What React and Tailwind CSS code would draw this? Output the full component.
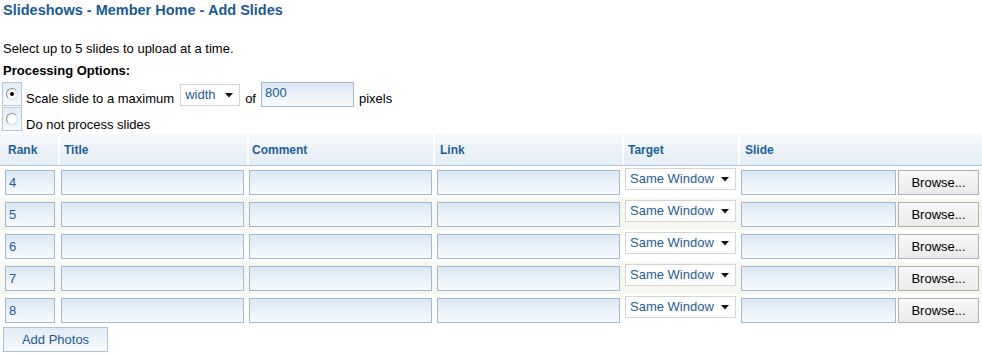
import React from 'react';

const ranks = [4, 5, 6, 7, 8];

const inputCls =
  'h-[25px] border border-[#9dbbd2] bg-linear-to-b from-[#dbe7f3] to-[#f8fbfd] px-[3px] text-[13px] text-[#1f5c99] outline-none';

const Radio = ({ checked }) => (
  <div className="ml-[2px] h-[24px] w-[20px] border border-[#b2c9db] bg-linear-to-b from-[#e3ecf5] to-[#f6f9fc] pl-[3px] pt-[5px]">
    <div className="flex h-[12px] w-[12px] items-center justify-center rounded-full border border-t-[#8a8a8a] border-l-[#8a8a8a] border-r-[#d8d8d8] border-b-[#d8d8d8] bg-white">
      {checked && <div className="h-[4px] w-[4px] rounded-full bg-black" />}
    </div>
  </div>
);

const Arrow = () => (
  <svg width="8" height="5" viewBox="0 0 8 5" className="shrink-0">
    <path d="M0 0h8L4 4.5z" fill="#111" />
  </svg>
);

const FakeSelect = ({ value, width, className = '' }) => (
  <div
    className={`flex h-[22px] items-center justify-between border border-[#d4d4d4] bg-white pl-[4px] pr-[6px] text-[13px] text-[#1f5c99] ${width} ${className}`}
  >
    <span>{value}</span>
    <Arrow />
  </div>
);

const cols = 'grid grid-cols-[58px_189px_186px_189px_116px_244px]';

export default function App() {
  return (
    <div className="h-[356px] w-[982px] overflow-hidden bg-white font-['Liberation_Sans',Arial,sans-serif] text-[13px] text-black">
      {/* header title */}
      <h1 className="h-[20px] pl-[3px] text-[14.5px] font-bold leading-[20px] text-[#1b5a96]">
        Slideshows - Member Home - Add Slides
      </h1>

      <p className="mt-[18px] pl-[3px] leading-[22px]">Select up to 5 slides to upload at a time.</p>
      <p className="pl-[3px] font-bold leading-[22px]">Processing Options:</p>

      {/* processing options */}
      <div className="flex h-[25px] items-start">
        <Radio checked />
        <span className="ml-[4px] mt-[9px] leading-[15px]">Scale slide to a maximum</span>
        <FakeSelect value="width" width="w-[60px]" className="ml-[6px] mt-[2px]" />
        <span className="ml-[5px] mt-[9px] leading-[15px]">of</span>
        <input
          readOnly
          value="800"
          className="ml-[5px] h-[25px] w-[93px] border border-[#9dbbd2] bg-linear-to-b from-[#dbe7f3] to-[#f8fbfd] px-[3px] pb-[4px] text-[13px] text-[#1f5c99] outline-none"
        />
        <span className="ml-[5px] mt-[9px] leading-[15px]">pixels</span>
      </div>
      <div className="flex h-[25px] items-start">
        <Radio />
        <span className="ml-[4px] mt-[10px] leading-[15px]">Do not process slides</span>
      </div>

      {/* slides table */}
      <div className="mt-[2px]">
        <div
          className={`${cols} h-[32px] border-b border-[#a8c6de] bg-linear-to-b from-[#f5f8fc] to-[#e4edf6] text-[12px] font-bold text-[#1e5f9c]`}
        >
          <div className="flex items-center pl-[8px]">Rank</div>
          <div className="flex items-center border-l-2 border-white pl-[4px]">Title</div>
          <div className="flex items-center border-l-2 border-white pl-[3px]">Comment</div>
          <div className="flex items-center border-l-2 border-white pl-[5px]">Link</div>
          <div className="flex items-center border-l-2 border-white pl-[4px]">Target</div>
          <div className="flex items-center border-l-2 border-white pl-[5px]">Slide</div>
        </div>

        {ranks.map((r, i) => (
          <div
            key={r}
            className={`${cols} h-[32px] pt-[4px] ${i % 2 === 1 ? 'bg-[#f7f6f0]' : 'bg-white'}`}
          >
            <div className="pl-[5px]">
              <input readOnly value={r} className={`${inputCls} w-[50px]`} />
            </div>
            <div className="pl-[3px]">
              <input readOnly className={`${inputCls} w-[183px]`} />
            </div>
            <div className="pl-[2px]">
              <input readOnly className={`${inputCls} w-[183px]`} />
            </div>
            <div className="pl-[4px]">
              <input readOnly className={`${inputCls} w-[183px]`} />
            </div>
            <div className="pl-[3px]">
              <FakeSelect value="Same Window" width="w-[111px]" className="-mt-[2px]" />
            </div>
            <div className="flex pl-[3px]">
              <input readOnly className={`${inputCls} w-[155px]`} />
              <button className="ml-[2px] h-[25px] w-[81px] border border-[#b0b0b0] bg-linear-to-b from-[#f7f7f7] to-[#ebebeb] text-[13px] text-black">
                Browse...
              </button>
            </div>
          </div>
        ))}

        <button className="ml-[3px] mt-[1px] h-[25px] w-[105px] border border-[#a9c3d8] bg-linear-to-b from-[#e2ebf5] to-[#f8fbfd] text-[13px] text-[#1f5c99]">
          Add Photos
        </button>
      </div>
    </div>
  );
}
